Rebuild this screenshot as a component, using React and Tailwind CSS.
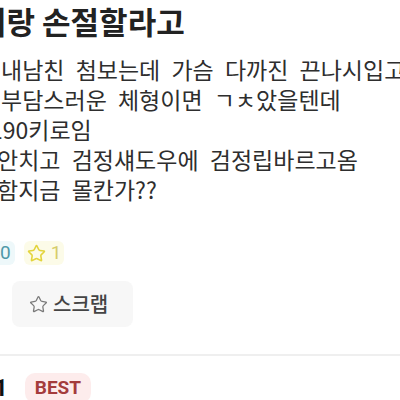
import { Star } from 'lucide-react';

const body = [
  { text: '내남친 첨보는데 가슴 다까진 끈나시입고', ml: 'ml-[1px]' },
  { text: '부담스러운 체형이면 ㄱㅊ았을텐데', ml: 'ml-[1px]' },
  { text: '190키로임', ml: 'ml-[-10px]' },
  { text: '안치고 검정섀도우에 검정립바르고옴', ml: 'ml-[-3px]' },
  { text: '함지금 몰칸가??', ml: 'ml-[-3px]' },
];

const App = () => {
  return (
    <div className="w-[400px] h-[400px] overflow-hidden bg-white font-['Noto_Sans_CJK_KR',sans-serif] text-[#222]">
      <h1 className="ml-[-22px] mt-[2px] text-[31px] leading-[38px] font-bold whitespace-nowrap">너랑 손절할라고</h1>

      <div className="mt-[14px] text-[23px] leading-[30px] text-[#2e2e2e] whitespace-nowrap [word-spacing:6px]">
        {body.map((line) => (
          <div key={line.text} className={line.ml}>
            {line.text}
          </div>
        ))}
      </div>

      <div className="mt-[37px] flex items-center gap-[9px] text-[19px] leading-[24px] font-['Roboto',sans-serif]">
        <span className="ml-[-10px] rounded-[6px] bg-[#eef8fa] pl-[10px] pr-[4px] text-[#4f98a8]">0</span>
        <span className="flex items-center gap-[5px] rounded-[6px] bg-[#fcfbe8] px-[3px] text-[#d6cd6a]">
          <Star className="w-[19px] h-[19px] text-[#e3d43c]" strokeWidth={2} />
          1
        </span>
      </div>

      <div className="mt-[16px] ml-[12px] w-[121px] h-[46px] rounded-[8px] bg-[#f7f7f7] flex items-center gap-[5px] pl-[17px]">
        <Star className="w-[19px] h-[19px] text-[#7a7a7a]" strokeWidth={1.6} />
        <span className="text-[20px] font-medium text-[#444]">스크랩</span>
      </div>

      <div className="mt-[27px] h-[2px] bg-[#efefef]" />

      <div className="mt-[17px] flex items-center gap-[17px]">
        <span className="ml-[-6px] text-[24px] leading-[28px] font-bold text-[#111] font-['Roboto',sans-serif]">1</span>
        <span className="rounded-[10px] bg-[#fdecec] px-[10px] h-[30px] flex items-center text-[19px] font-bold text-[#a43c3c] font-['Roboto',sans-serif]">
          BEST
        </span>
      </div>
    </div>
  );
};

export default App;
